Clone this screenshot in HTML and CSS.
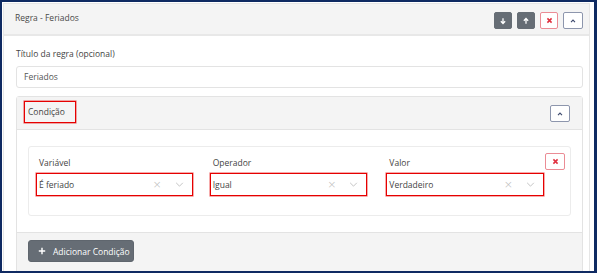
FILE: index.html
```html
<!DOCTYPE html>
<html lang="pt">
<head>
<meta charset="utf-8">
<link rel="stylesheet" href="styles.css">
</head>
<body>
<div class="frame">
  <div class="card">
    <div class="card-head">
      <span class="title">Regra - Feriados</span>
      <div class="actions">
        <button class="btn btn-dark"><svg viewBox="0 0 10 10" width="8" height="8"><path d="M5 1.5V8M2.3 5.4L5 8.1L7.7 5.4" fill="none" stroke="#fff" stroke-width="1.6"/></svg></button>
        <button class="btn btn-dark"><svg viewBox="0 0 10 10" width="8" height="8"><path d="M5 8.5V2M2.3 4.6L5 1.9L7.7 4.6" fill="none" stroke="#fff" stroke-width="1.6"/></svg></button>
        <button class="btn btn-red"><svg viewBox="0 0 10 10" width="7" height="7"><path d="M2 2L8 8M8 2L2 8" stroke="#e0303f" stroke-width="2.2"/></svg></button>
        <button class="btn btn-outline"><svg viewBox="0 0 10 10" width="8" height="8"><path d="M2.5 6.3L5 3.8L7.5 6.3" fill="none" stroke="#3d4a6e" stroke-width="1.4"/></svg></button>
      </div>
    </div>
    <div class="card-body">
      <label class="field-label">Título da regra (opcional)</label>
      <div class="input">Feriados</div>
      <div class="cond">
        <div class="cond-head">
          <span class="cond-title">Condição</span>
          <button class="btn btn-outline"><svg viewBox="0 0 10 10" width="8" height="8"><path d="M2.5 6.3L5 3.8L7.5 6.3" fill="none" stroke="#3d4a6e" stroke-width="1.4"/></svg></button>
        </div>
        <div class="cond-body">
          <div class="row">
            <div class="col col1">
              <div class="lbl">Variável</div>
              <div class="select"><span class="val">É feriado</span><span class="clr">×</span><svg class="chev" viewBox="0 0 10 6" width="9" height="5"><path d="M1 1L5 5L9 1" fill="none" stroke="#b8b8b8" stroke-width="1"/></svg></div>
            </div>
            <div class="col col2">
              <div class="lbl">Operador</div>
              <div class="select"><span class="val">Igual</span><span class="clr">×</span><svg class="chev" viewBox="0 0 10 6" width="9" height="5"><path d="M1 1L5 5L9 1" fill="none" stroke="#b8b8b8" stroke-width="1"/></svg></div>
            </div>
            <div class="col col3">
              <div class="lbl">Valor</div>
              <div class="select"><span class="val">Verdadeiro</span><span class="clr">×</span><svg class="chev" viewBox="0 0 10 6" width="9" height="5"><path d="M1 1L5 5L9 1" fill="none" stroke="#b8b8b8" stroke-width="1"/></svg></div>
            </div>
            <button class="btn btn-red rm"><svg viewBox="0 0 10 10" width="7" height="7"><path d="M2 2L8 8M8 2L2 8" stroke="#e0303f" stroke-width="2.2"/></svg></button>
          </div>
        </div>
        <div class="cond-foot">
          <button class="add"><svg viewBox="0 0 10 10" width="8" height="8"><path d="M5 1V9M1 5H9" stroke="#fff" stroke-width="1.8"/></svg><span>Adicionar Condição</span></button>
        </div>
      </div>
    </div>
  </div>
</div>
</body>
</html>
```

FILE: styles.css
```css
* { box-sizing: border-box; }
html, body { margin: 0; padding: 0; background: #fff; }
body { font-family: "Open Sans", "Noto Sans", sans-serif; font-size: 8.5px; color: #444; }

.frame {
  width: 597px; height: 273px;
  border: 2px solid #0f2a62;
  border-right-width: 3px;
  padding: 1px 4px 0 1px;
  overflow: hidden;
  background: #fff;
}
.card { border: 1px solid #e6e6e6; background: #fff; }
.card-head {
  height: 32px;
  background: #f4f4f4;
  border-bottom: 2px solid #e8e8e8;
  display: flex; align-items: center; justify-content: space-between;
  padding: 0 6px 0 11px;
}
.title { color: #4a4a4a; margin-top: -3px; }
.actions { display: flex; gap: 5px; margin-top: 3px; }
.btn {
  width: 18px; height: 17px; padding: 0; margin: 0;
  border-radius: 2px; border: 1px solid transparent;
  display: flex; align-items: center; justify-content: center;
  background: #fff;
}
.btn-dark { background: #666d75; border-color: #666d75; }
.btn-red { border-color: #eb8c95; background: #fff; }
.btn-outline { border-color: #8d96ad; background: #fff; width: 20px; }

.card-body { padding: 11px 6px 0 12px; }
.field-label { display: block; color: #444; line-height: 12px; margin-top: 1px; }
.input {
  margin-top: 6px; height: 22px;
  border: 1px solid #e3e3e3; border-radius: 3px;
  padding: 0 7px; line-height: 20px; color: #555;
}
.cond { margin-top: 8px; border: 1px solid #e3e3e3; border-radius: 3px; }
.cond-head {
  height: 33px; background: #f4f4f4; border-bottom: 1px solid #e3e3e3;
  display: flex; align-items: center; justify-content: space-between;
  padding: 0 12px 0 7px;
}
.cond-title {
  border: 1px solid #e60000;
  box-shadow: 0 0 0 0.6px rgba(230,0,0,0.55);
  height: 22px; width: 52px;
  display: flex; align-items: center; padding-left: 3px;
  margin-top: -3px; color: #444;
}
.cond-head .btn { margin-top: 1px; }
.cond-body { padding: 16px 11px 16px 11px; background: #fff; border-bottom: 1px solid #e3e3e3; }
.row {
  border: 1px solid #ececec; border-radius: 3px;
  display: flex; align-items: flex-start;
  padding: 5px 5px 18px 7px;
  height: 70px;
}
.col { display: flex; flex-direction: column; }
.col1 { width: 157px; margin-right: 17px; }
.col2 { width: 158px; margin-right: 19px; }
.col3 { width: 158px; }
.lbl { padding-left: 3px; margin-top: 5px; line-height: 11px; color: #444; }
.select {
  margin-top: 5px; height: 23px;
  border: 1px solid #e60000;
  box-shadow: 0 0 0 0.6px rgba(230,0,0,0.55);
  display: flex; align-items: center;
  padding: 0 8px 0 2px; color: #444;
}
.val { flex: 1; }
.clr { color: #bcbcbc; font-size: 11px; margin-right: 13px; font-family: "DejaVu Sans", sans-serif; font-weight: 300; }
.rm { margin-left: 1px; margin-top: 1px; width: 20px; }
.cond-foot { background: #f4f4f4; padding: 7px 11px 8px 11px; height: 40px; }
.add {
  height: 22px; width: 106px; padding: 0 0 0 9px;
  background: #666d75; border: 1px solid #5f666e; border-radius: 3px;
  color: #fff; font-family: inherit; font-size: 8.5px;
  display: flex; align-items: center; gap: 7px;
}
```
